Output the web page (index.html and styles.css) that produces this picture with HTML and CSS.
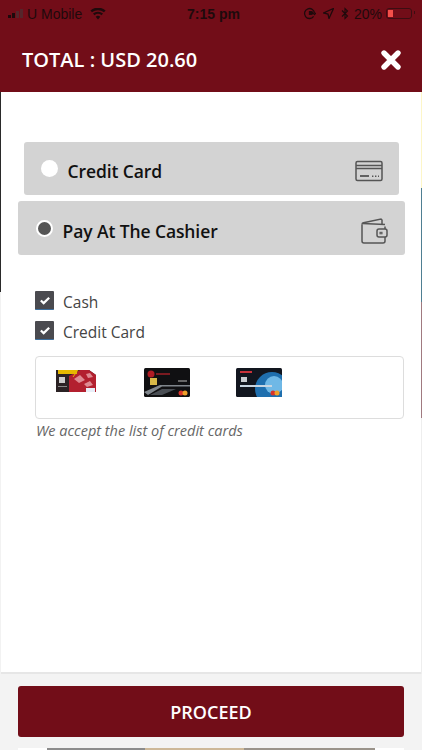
FILE: index.html
```html
<!DOCTYPE html>
<html lang="en">
<head>
    <meta charset="UTF-8">
    <meta name="viewport" content="width=device-width, initial-scale=1.0">
    <title>Payment</title>
    <link rel="stylesheet" href="styles.css">
</head>
<body>
    <div class="app">
        <!-- Status bar -->
        <div class="status-bar">
            <div class="status-left">
                <span class="signal"><i class="on"></i><i class="on"></i><i></i><i></i><i></i></span>
                <span>U Mobile</span>
                <svg class="wifi" width="16" height="12" viewBox="0 0 16 12"><path d="M8 11.5 5.7 8.7a3.6 3.6 0 0 1 4.6 0zM4.5 7.3 3 5.5a7.8 7.8 0 0 1 10 0l-1.5 1.8a5.5 5.5 0 0 0-7 0zM2 4.3.4 2.4a11.8 11.8 0 0 1 15.2 0L14 4.3a9.4 9.4 0 0 0-12 0z"/></svg>
            </div>
            <div class="status-time">7:15 pm</div>
            <div class="status-right">
                <svg width="13" height="13" viewBox="0 0 12 12" fill="none" stroke="#1e0a0c" stroke-width="1.2"><path d="M9.8 8.6A4.6 4.6 0 1 1 10.6 6"/><path d="M6 4.2h1.6a1.2 1.2 0 0 1 0 2.6H6z" fill="#1e0a0c"/><path d="M9 5.4 10.6 7 12 5.4" stroke-width="1"/></svg>
                <svg class="gap-left" width="11" height="11" viewBox="0 0 11 11"><path d="M10.5.5 6 10.5 5 6 .5 5z" fill="none" stroke="#1e0a0c" stroke-width="1.3"/></svg>
                <svg class="gap-left" width="8" height="13" viewBox="0 0 8 13" fill="none" stroke="#1e0a0c" stroke-width="1.1"><path d="M1 3.5 6.5 9 4 11.5v-10L6.5 4 1 9.5"/></svg>
                <span class="battery-text">20%</span>
                <span class="battery"><span class="battery-level"></span></span>
            </div>
        </div>

        <!-- Header -->
        <header class="top-bar">
            <h1>TOTAL : USD 20.60</h1>
            <svg class="close" width="22" height="22" viewBox="0 0 22 22"><path d="M4 4 18 18M18 4 4 18" stroke="#fff" stroke-width="5.4" stroke-linecap="round"/></svg>
        </header>

        <div class="backdrop">
            <main class="content">
                <div class="pay-option">
                    <span class="radio"></span>
                    <span class="pay-label">Credit Card</span>
                    <svg class="pay-icon" width="28" height="22" viewBox="0 0 28 22" fill="none" stroke="#555" stroke-width="1.5"><rect x="1" y="1.5" width="26" height="19" rx="1.5"/><path d="M1 5.5h26M1 8.5h26"/><path d="M5 16h9" stroke-width="1.8"/><path d="M17 16.2h7" stroke-dasharray="1.4 1.6"/></svg>
                </div>
                <div class="pay-option selected">
                    <span class="radio"></span>
                    <span class="pay-label">Pay At The Cashier</span>
                    <svg class="pay-icon" width="28" height="28" viewBox="0 0 28 28" fill="none" stroke="#555" stroke-width="1.5"><path d="M25 9.5V24a2 2 0 0 1-2 2H4a2 2 0 0 1-2-2V7.5"/><path d="M2 7.5c0-1 .6-1.6 1.5-1.8L21 2l1 1v4.5"/><path d="M2.5 6.5 25 7.5"/><rect x="17" y="12" width="10" height="8" rx="2" fill="#d3d3d3"/><rect x="20" y="15.3" width="2" height="1.5" stroke-width="1"/></svg>
                </div>

                <div class="accept">
                    <label class="check-row"><span class="check"><svg width="12" height="9" viewBox="0 0 10 8"><path d="M1.3 4 3.8 6.3 8.7 1.5" fill="none" stroke="#fff" stroke-width="2"/></svg></span>Cash</label>
                    <label class="check-row"><span class="check"><svg width="12" height="9" viewBox="0 0 10 8"><path d="M1.3 4 3.8 6.3 8.7 1.5" fill="none" stroke="#fff" stroke-width="2"/></svg></span>Credit Card</label>
                    <div class="card-box">
                        <svg class="card card-1" width="40" height="24" viewBox="0 0 40 24">
                            <path d="M0 1h33l7 5v17H0z" fill="#2b2224"/>
                            <path d="M13 7 24 1h9l7 5v17H13z" fill="#b3202f"/>
                            <path d="M18 10l6-4 5 5-6 3zM28 15l6-3 3 4-6 2zM30 5l4-1 3 4-5 1z" fill="#df8a92"/>
                            <path d="M22 1l-5 7" stroke="#e6b800" stroke-width="1"/>
                            <rect x="2" y="1" width="19" height="4" fill="#e6b800"/>
                            <rect x="3" y="8" width="6" height="6" fill="#ccc"/>
                            <rect x="2" y="17" width="9" height="1" fill="#888"/>
                            <rect x="30" y="19" width="9" height="4" fill="#e8eef8"/>
                        </svg>
                        <svg class="card card-2" width="46" height="29" viewBox="0 0 46 29">
                            <rect width="46" height="29" rx="1.5" fill="#101012"/>
                            <circle cx="7" cy="6" r="3.5" fill="#b01c24"/>
                            <rect x="12" y="5" width="14" height="2" fill="#7a1a20"/>
                            <rect x="34" y="12" width="9" height="2" fill="#666"/>
                            <rect x="6" y="10" width="7" height="7" fill="#d8b848"/>
                            <path d="M0 24 16 17h30v1.5H18L4 27z" fill="#80868c"/>
                            <path d="M6 27 18 21h14l-14 6z" fill="#4a4e54"/>
                            <circle cx="37" cy="25" r="2.5" fill="#d8332a"/>
                            <circle cx="41" cy="25" r="2.5" fill="#eea02a"/>
                        </svg>
                        <svg class="card card-3" width="46" height="29" viewBox="0 0 46 29">
                            <rect width="46" height="29" rx="1.5" fill="#12161f"/>
                            <circle cx="36" cy="21" r="17" fill="#1f6fae"/>
                            <circle cx="38" cy="17" r="9" fill="#6fb8e6"/>
                            <rect x="4" y="3" width="12" height="2" fill="#c9323a"/>
                            <rect x="5" y="9" width="6" height="5" fill="#c8ccd0"/>
                            <rect x="4" y="17" width="32" height="2" fill="#c8d6e2"/>
                            <circle cx="37" cy="25" r="2.5" fill="#d8332a"/>
                            <circle cx="41" cy="25" r="2.5" fill="#eea02a"/>
                        </svg>
                    </div>
                    <p class="accept-note">We accept the list of credit cards</p>
                </div>
            </main>
        </div>

        <footer class="bottom">
            <button class="proceed" type="button">PROCEED</button>
        </footer>
        <div class="peek"><div class="peek-image"></div></div>
    </div>
</body>
</html>
```

FILE: styles.css
```css
html, body {
    margin: 0;
    padding: 0;
}

body {
    font-family: "Open Sans", Arial, sans-serif;
    background-color: #f3f3f3;
}

.app {
    width: 422px;
    height: 750px;
    display: flex;
    flex-direction: column;
    overflow: hidden;
}

.status-bar {
    height: 27px;
    background-color: #720d18;
    color: #1e0a0c;
    font-family: "Liberation Sans", Arial, sans-serif;
    font-size: 14px;
    display: flex;
    align-items: center;
    justify-content: space-between;
    padding: 0 10px 0 8px;
    position: relative;
}

.status-left, .status-right {
    display: flex;
    align-items: center;
}

.status-left {
    gap: 3px;
}

.signal {
    display: flex;
    align-items: flex-end;
    gap: 1px;
    height: 9px;
    margin-right: 1px;
}

.signal i {
    width: 3px;
    background-color: #55262b;
}

.signal i:nth-child(1) { height: 3px; }
.signal i:nth-child(2) { height: 5px; }
.signal i:nth-child(3) { height: 7px; }
.signal i:nth-child(4) { height: 9px; }
.signal i:nth-child(5) { display: none; }
.signal i.on { background-color: #1e0a0c; }

.wifi {
    margin-left: 5px;
    fill: #1e0a0c;
}

.status-time {
    position: absolute;
    left: 187px;
    font-weight: bold;
}

.gap-left {
    margin-left: 7px;
}

.battery-text {
    margin-left: 5px;
}

.battery {
    position: relative;
    width: 26px;
    height: 11px;
    margin-left: 4px;
    border: 1px solid #3c0d12;
    border-radius: 3px;
    box-sizing: border-box;
    padding: 1px;
    display: flex;
}

.battery::after {
    content: "";
    position: absolute;
    right: -4px;
    top: 2px;
    width: 1px;
    height: 3px;
    background-color: #3c0d12;
}

.battery-level {
    width: 5px;
    background-color: #f4504a;
}

.top-bar {
    height: 65px;
    background-color: #720d18;
    display: flex;
    align-items: center;
    justify-content: space-between;
    padding: 0 20px 0 22px;
    box-sizing: border-box;
}

.top-bar h1 {
    margin: 0;
    color: #fff;
    font-size: 20px;
    font-weight: 600;
}

/* what shows through at the edges of the modal */
.backdrop {
    flex: 1;
    display: flex;
    padding: 0 1px;
    background-color: #eee;
    background-image:
        linear-gradient(#2a2a2a 0, #2a2a2a 200px, #f2f2f2 200px),
        linear-gradient(#fdf6c8 0, #fdf6c8 96px, #4f7f92 96px, #4f7f92 210px, #a07a80 210px, #a07a80 326px, #eee 326px);
    background-size: 1px 100%, 1px 100%;
    background-position: left top, right top;
    background-repeat: no-repeat;
}

.content {
    flex: 1;
    background-color: #fff;
    border-bottom: 2px solid #e6e6e6;
    padding-top: 50px;
    box-sizing: border-box;
}

.pay-option {
    width: 375px;
    height: 53px;
    margin: 0 auto 6px;
    background-color: #d3d3d3;
    border-radius: 3px;
    display: flex;
    align-items: center;
    padding: 5px 16px 0 17px;
    box-sizing: border-box;
}

.pay-option.selected {
    width: 387px;
    height: 54px;
    padding-left: 18px;
    padding-right: 17px;
}

.radio {
    width: 17px;
    height: 17px;
    border-radius: 50%;
    background-color: #fff;
    margin-right: 10px;
    margin-top: -5px;
    box-sizing: border-box;
}

.selected .radio {
    background-color: #555;
    border: 2px solid #fff;
}

.pay-label {
    flex: 1;
    color: #111;
    font-size: 17.5px;
    font-weight: 600;
    letter-spacing: -0.1px;
}

.accept {
    padding: 26px 17px 0 34px;
}

.check-row {
    display: flex;
    align-items: center;
    height: 30px;
    font-size: 15.5px;
    color: #444;
}

.check {
    width: 19px;
    height: 19px;
    background-color: #4a4a4f;
    border-bottom: 1px solid #3d6f9e;
    border-radius: 1px;
    margin-right: 9px;
    margin-top: -3px;
    box-sizing: border-box;
    display: flex;
    align-items: center;
    justify-content: center;
}

.card-box {
    height: 63px;
    margin-top: 9px;
    border: 1px solid #ddd;
    border-radius: 4px;
    box-sizing: border-box;
    display: flex;
    align-items: flex-start;
    padding: 11px 0 0 20px;
}

.card {
    display: block;
}

.card-1 {
    margin-top: 1px;
}

.card-2 {
    margin-left: 48px;
}

.card-3 {
    margin-left: 46px;
}

.accept-note {
    margin: 2px 0 0 1px;
    font-size: 14.5px;
    font-style: italic;
    color: #666;
}

.bottom {
    height: 74px;
    background-color: #f3f3f3;
    padding: 12px 18px 0;
    box-sizing: border-box;
}

.proceed {
    display: block;
    width: 100%;
    height: 51px;
    border: none;
    border-radius: 3px;
    background-color: #720d18;
    color: #fff;
    font-family: "Open Sans", Arial, sans-serif;
    font-size: 18px;
    font-weight: 600;
    cursor: pointer;
}

.peek {
    height: 2px;
    margin: 0 18px;
    padding: 0 29px;
    background-color: #fff;
}

.peek-image {
    height: 2px;
    background: linear-gradient(90deg, #8c8c8c 0, #8c8c8c 30%, #cdb898 30%, #cdb898 60%, #9a938a 60%, #9a938a 100%);
}
```
